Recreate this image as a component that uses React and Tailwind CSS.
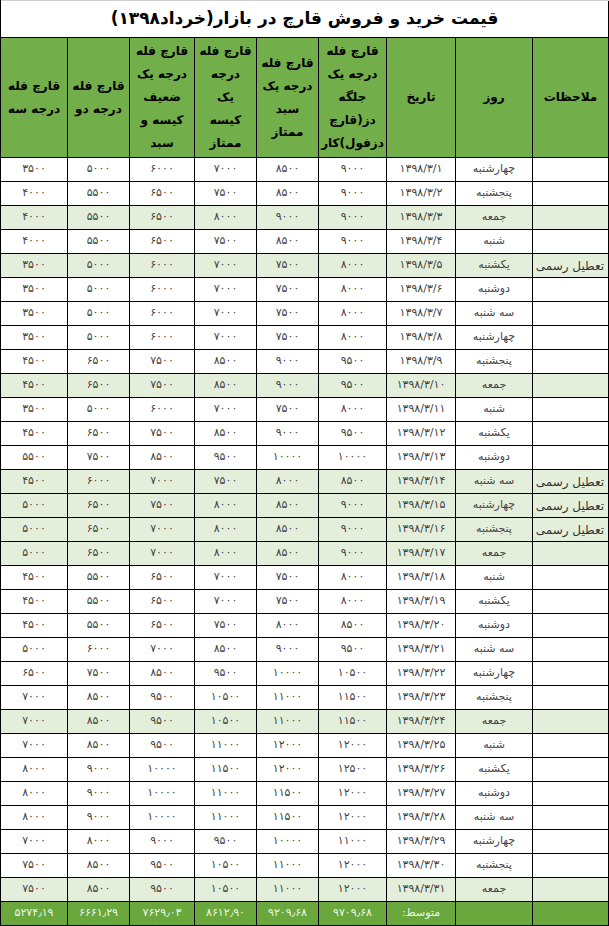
const fa = n => String(n).replace(/\d/g, d => '۰۱۲۳۴۵۶۷۸۹'[d])

// [day, note, highlighted, col6 (جلگه), col5, col4, col3, col2, col1]
const ROWS = [
  ['چهارشنبه', '', false, 9000, 8500, 7000, 6000, 5000, 3500],
  ['پنجشنبه', '', false, 9000, 8500, 7500, 6500, 5500, 4000],
  ['جمعه', '', true, 9000, 9000, 8000, 6500, 5500, 4000],
  ['شنبه', '', false, 9000, 8500, 7500, 6500, 5500, 4000],
  ['یکشنبه', 'تعطیل رسمی', true, 8000, 7500, 7000, 6000, 5000, 3500],
  ['دوشنبه', '', false, 8000, 7500, 7000, 6000, 5000, 3500],
  ['سه شنبه', '', false, 8000, 7500, 7000, 6000, 5000, 3500],
  ['چهارشنبه', '', false, 8000, 7500, 7000, 6000, 5000, 3500],
  ['پنجشنبه', '', false, 9500, 9000, 8500, 7500, 6500, 4500],
  ['جمعه', '', true, 9500, 9000, 8500, 7500, 6500, 4500],
  ['شنبه', '', false, 8000, 7500, 7000, 6000, 5000, 3500],
  ['یکشنبه', '', false, 9500, 9000, 8500, 7500, 6500, 4500],
  ['دوشنبه', '', false, 10000, 10000, 9500, 8500, 7500, 5500],
  ['سه شنبه', 'تعطیل رسمی', true, 8500, 8000, 7500, 7000, 6000, 4500],
  ['چهارشنبه', 'تعطیل رسمی', true, 9000, 8500, 8000, 7500, 6500, 5000],
  ['پنجشنبه', 'تعطیل رسمی', true, 9000, 8500, 8000, 7000, 6500, 5000],
  ['جمعه', '', true, 9000, 8500, 8000, 7000, 6500, 5000],
  ['شنبه', '', false, 8000, 7500, 7000, 6500, 5500, 4500],
  ['یکشنبه', '', false, 8000, 7500, 7000, 6500, 5500, 4500],
  ['دوشنبه', '', false, 8500, 8000, 7500, 6500, 5500, 4500],
  ['سه شنبه', '', false, 9500, 9000, 8500, 7000, 6000, 5000],
  ['چهارشنبه', '', false, 10500, 10000, 9500, 8500, 7500, 6500],
  ['پنجشنبه', '', false, 11500, 11000, 10500, 9500, 8500, 7000],
  ['جمعه', '', true, 11500, 11000, 10500, 9500, 8500, 7000],
  ['شنبه', '', false, 12000, 12000, 11000, 9500, 8500, 7000],
  ['یکشنبه', '', false, 12500, 12000, 11500, 10000, 9000, 8000],
  ['دوشنبه', '', false, 12000, 11500, 11000, 10000, 9000, 8000],
  ['سه شنبه', '', false, 12000, 11500, 11000, 10000, 9000, 8000],
  ['چهارشنبه', '', false, 11000, 10000, 9500, 9000, 8000, 7000],
  ['پنجشنبه', '', false, 12000, 11000, 10500, 9500, 8500, 7500],
  ['جمعه', '', true, 12000, 11000, 10500, 9500, 8500, 7500],
]

const AVG = ['۹۷۰۹٫۶۸', '۹۲۰۹٫۶۸', '۸۶۱۲٫۹۰', '۷۶۲۹٫۰۳', '۶۶۶۱٫۲۹', '۵۲۷۴٫۱۹']

const HEADERS = [
  ['ملاحظات'],
  ['روز'],
  ['تاریخ'],
  ['قارچ فله', 'درجه یک', 'جلگه', 'دز(قارچ', 'دزفول)کار'],
  ['قارچ فله', 'درجه یک', 'سبد', 'ممتاز'],
  ['قارچ فله', 'درجه', 'یک', 'کیسه', 'ممتاز'],
  ['قارچ فله', 'درجه یک', 'ضعیف', 'کیسه و', 'سبد'],
  ['قارچ فله', 'درجه دو'],
  ['قارچ فله', 'درجه سه'],
]

const WIDTHS = ['w-[76px]', 'w-[77px]', 'w-[69px]', 'w-[68px]', 'w-[62px]', 'w-[62px]', 'w-[65px]', 'w-[62px]', 'w-[67px]']

const cell = 'border border-black p-0 text-center whitespace-nowrap overflow-hidden'

export default function App() {
  return (
    <div className="w-[609px] h-[926px] bg-white overflow-hidden font-['DejaVu_Sans',sans-serif]">
      <table dir="rtl" className="w-[608px] table-fixed border-collapse">
        <colgroup>
          {WIDTHS.map((w, i) => <col key={i} className={w} />)}
        </colgroup>
        <thead>
          <tr className="h-[37px]">
            <th colSpan={9} className="border border-t-[#cfcfcf] border-x-black border-b-black bg-white text-center text-[17px] font-bold text-black">
              قیمت خرید و فروش قارچ در بازار(خرداد۱۳۹۸)
            </th>
          </tr>
          <tr className="h-[120px]">
            {HEADERS.map((lines, i) => (
              <th key={i} className={`${cell} bg-[#72ae4a] align-middle text-[12px] font-bold leading-[23px] text-black`}>
                {lines.map((l, j) => <div key={j}>{l}</div>)}
              </th>
            ))}
          </tr>
        </thead>
        <tbody>
          {ROWS.map(([day, note, hl, ...vals], i) => (
            <tr key={i} className={`h-[24px] ${hl ? 'bg-[#e4efdb]' : 'bg-white'}`}>
              <td className={`${cell} pr-1 text-right text-[12px] text-[#333]`}>{note}</td>
              <td className={`${cell} text-[11px] text-[#444]`}>{day}</td>
              <td className={`${cell} text-[11px] text-[#444]`}>
                <span dir="ltr">{fa(`1398/3/${i + 1}`)}</span>
              </td>
              {vals.map((v, j) => (
                <td key={j} className={`${cell} text-[11px] text-[#444]`}>
                  <span dir="ltr">{fa(v)}</span>
                </td>
              ))}
            </tr>
          ))}
          <tr className="h-[24px] bg-[#6aa83e]">
            <td className={cell} />
            <td className={cell} />
            <td className={`${cell} text-[11px] text-[#eef6e6]`}>متوسط:</td>
            {AVG.map((v, j) => (
              <td key={j} className={`${cell} text-[11px] text-[#eef6e6]`}>
                <span dir="ltr">{v}</span>
              </td>
            ))}
          </tr>
        </tbody>
      </table>
    </div>
  )
}
